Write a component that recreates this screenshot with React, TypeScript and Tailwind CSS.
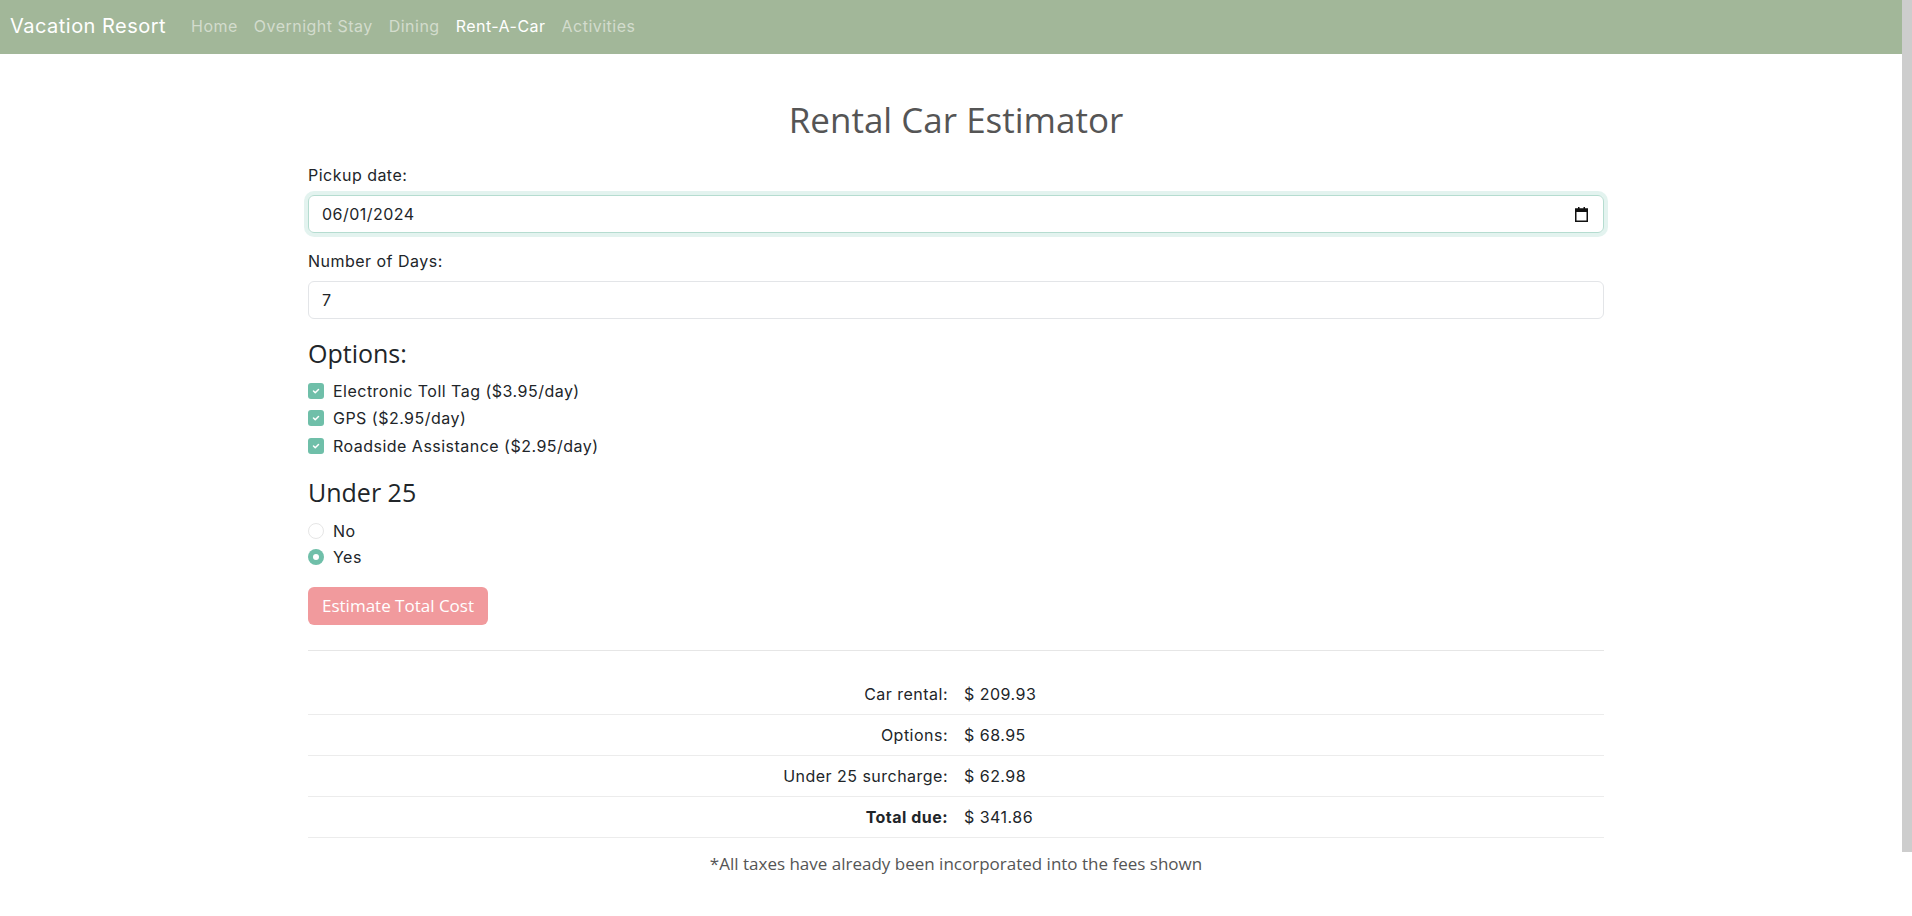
import React from 'react';

const navLinks = [
  { label: 'Home', active: false },
  { label: 'Overnight Stay', active: false },
  { label: 'Dining', active: false },
  { label: 'Rent-A-Car', active: true },
  { label: 'Activities', active: false },
];

const options = [
  'Electronic Toll Tag ($3.95/day)',
  'GPS ($2.95/day)',
  'Roadside Assistance ($2.95/day)',
];

const summary = [
  { label: 'Car rental:', value: '$ 209.93', bold: false },
  { label: 'Options:', value: '$ 68.95', bold: false },
  { label: 'Under 25 surcharge:', value: '$ 62.98', bold: false },
  { label: 'Total due:', value: '$ 341.86', bold: true },
];

const CheckBox: React.FC = () => (
  <span className="w-[16px] h-[16px] rounded-[3px] bg-[#6fbfa9] flex items-center justify-center shrink-0">
    <svg width="10" height="10" viewBox="0 0 20 20" fill="none">
      <path d="M5 10l3.5 3.5L15 7" stroke="white" strokeWidth="3" strokeLinecap="round" strokeLinejoin="round" />
    </svg>
  </span>
);

const Radio: React.FC<{ checked: boolean }> = ({ checked }) =>
  checked ? (
    <span className="w-[16px] h-[16px] rounded-full bg-[#6fbfa9] flex items-center justify-center shrink-0">
      <span className="w-[6px] h-[6px] rounded-full bg-white" />
    </span>
  ) : (
    <span className="w-[16px] h-[16px] rounded-full border border-[#e6e6e6] bg-white shrink-0" />
  );

const CalendarIcon: React.FC = () => (
  <svg width="13" height="15" viewBox="0 0 13 15">
    <rect x="3" y="0" width="1.5" height="3" fill="#111" />
    <rect x="8.5" y="0" width="1.5" height="3" fill="#111" />
    <rect x="0.75" y="2" width="11.5" height="12.25" fill="none" stroke="#111" strokeWidth="1.5" />
    <rect x="0.75" y="2" width="11.5" height="3" fill="#111" />
  </svg>
);

export default function App() {
  return (
    <div className="relative h-[916px] overflow-hidden bg-white text-[#212529] font-['Inter',sans-serif] tracking-[0.03em]">
      <nav className="h-[54px] bg-[#a2b799] flex items-center pl-[10px] pb-[2px]">
        <span className="text-white text-[20px] mr-[17px]">Vacation Resort</span>
        <ul className="flex items-center">
          {navLinks.map(link => (
            <li
              key={link.label}
              className={`px-[8px] text-[16px] ${link.active ? 'text-white' : 'text-[#d3dccd]'}`}
            >
              {link.label}
            </li>
          ))}
        </ul>
      </nav>

      <main className="w-[1296px] mx-auto">
        <h1 className="mt-[45px] text-center text-[35px] leading-[42px] text-[#555555] font-['Open_Sans',sans-serif] tracking-normal">
          Rental Car Estimator
        </h1>

        <div className="mt-[22px]">
          <label className="block text-[16px] leading-6 mb-2">Pickup date:</label>
          <div className="h-[38px] rounded-[6px] border border-[#b5dcd0] ring-4 ring-[#72c1ad]/20 flex items-center justify-between pl-[13px] pr-[15px] text-[16px]">
            <span>06/01/2024</span>
            <CalendarIcon />
          </div>
        </div>

        <div className="mt-4">
          <label className="block text-[16px] leading-6 mb-2">Number of Days:</label>
          <div className="h-[38px] rounded-[6px] border border-[#e3e5e8] flex items-center pl-[13px] text-[16px]">
            7
          </div>
        </div>

        <h4 className="mt-[19px] text-[25px] leading-[30px] font-['Open_Sans',sans-serif] tracking-normal">Options:</h4>
        <div className="mt-[9px]">
          {options.map(opt => (
            <div key={opt} className="h-[27.5px] flex items-center gap-[9px] text-[16px]">
              <CheckBox />
              <span>{opt}</span>
            </div>
          ))}
        </div>

        <h4 className="mt-[17px] text-[25px] leading-[30px] font-['Open_Sans',sans-serif] tracking-normal">Under 25</h4>
        <div className="mt-[11px]">
          <div className="h-[26px] flex items-center gap-[9px] text-[16px]">
            <Radio checked={false} />
            <span>No</span>
          </div>
          <div className="h-[26px] flex items-center gap-[9px] text-[16px]">
            <Radio checked={true} />
            <span>Yes</span>
          </div>
        </div>

        <button className="mt-[17px] h-[38px] px-[14px] rounded-[6px] bg-[#f19a9d] text-white text-[17px] font-['Open_Sans',sans-serif] tracking-normal">
          Estimate Total Cost
        </button>

        <hr className="mt-[25px] border-0 border-t border-[#e6e6e6]" />

        <table className="mt-[23px] w-full text-[16px]">
          <tbody>
            {summary.map(row => (
              <tr key={row.label} className="h-[41px] border-b border-[#ececec]">
                <td className={`w-1/2 text-right pr-[8px] ${row.bold ? 'font-bold' : ''}`}>{row.label}</td>
                <td className="w-1/2 pl-[8px]">{row.value}</td>
              </tr>
            ))}
          </tbody>
        </table>

        <p className="mt-[14px] text-center text-[17px] leading-6 text-[#555555] font-['Open_Sans',sans-serif] tracking-normal">
          *All taxes have already been incorporated into the fees shown
        </p>
      </main>

      <div className="absolute top-0 right-0 w-[10px] h-[852px] bg-[#cdcdcd]" />
    </div>
  );
}
